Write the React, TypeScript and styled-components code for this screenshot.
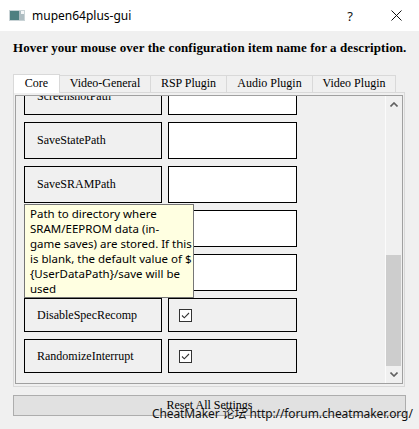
import React from "react";
import styled, { createGlobalStyle } from "styled-components";

const Global = createGlobalStyle`
  html, body { margin: 0; padding: 0; background: #f0f0f0; }
  body { width: 419px; height: 429px; overflow: hidden; }
`;

const Window = styled.div`
  position: relative;
  width: 419px;
  height: 429px;
  background: #f0f0f0;
  display: flex;
  flex-direction: column;
  overflow: hidden;
`;

const TitleBar = styled.div`
  height: 31px;
  flex: none;
  background: #ffffff;
  display: flex;
  align-items: center;
  padding-left: 9px;
  font-family: "Noto Sans", "Open Sans", sans-serif;
  font-size: 12px;
  color: #000;
`;

const TitleText = styled.span`
  margin-left: 7px;
  flex: 1;
  line-height: 16px;
`;

const TitleButton = styled.div`
  width: 46px;
  height: 31px;
  display: flex;
  align-items: center;
  justify-content: center;
  font-family: "Noto Sans", sans-serif;
  font-size: 13px;
  color: #111;
`;

const Body = styled.div`
  flex: 1;
  display: flex;
  flex-direction: column;
  padding: 9px 14px 0 13px;
`;

const Header = styled.div`
  font-family: "Liberation Serif", serif;
  font-weight: bold;
  font-size: 13px;
  letter-spacing: 0.08px;
  line-height: 16px;
  height: 16px;
  white-space: nowrap;
  color: #000;
`;

const TabBar = styled.div`
  margin-top: 18px;
  height: 18px;
  display: flex;
  align-items: flex-end;
  position: relative;
  z-index: 1;
`;

const Tab = styled.div<{ $w: number; $active?: boolean; $first?: boolean }>`
  box-sizing: border-box;
  width: ${(p) => p.$w}px;
  height: ${(p) => (p.$active ? 19 : 17)}px;
  margin-bottom: ${(p) => (p.$active ? -1 : 0)}px;
  background: ${(p) => (p.$active ? "#ffffff" : "#f0f0f0")};
  border-top: 1px solid #d9d9d9;
  border-right: 1px solid #d9d9d9;
  border-left: ${(p) => (p.$first ? "1px solid #d9d9d9" : "none")};
  font-family: "Liberation Serif", serif;
  font-size: 12px;
  line-height: ${(p) => (p.$active ? 17 : 15)}px;
  text-align: center;
  color: #000;
  white-space: nowrap;
`;

const Pane = styled.div`
  box-sizing: border-box;
  height: 295px;
  border: 1px solid #d9d9d9;
  padding: 2px 1px 2px 1px;
  background: #f0f0f0;
`;

const ScrollFrame = styled.div`
  box-sizing: border-box;
  height: 100%;
  border: 1px solid #a0a0a0;
  display: flex;
`;

const Viewport = styled.div`
  flex: 1;
  overflow: hidden;
  padding-left: 8px;
`;

const RowList = styled.div<{ $offset: number }>`
  margin-top: ${(p) => -p.$offset}px;
  display: flex;
  flex-direction: column;
  gap: 7px;
`;

const Row = styled.div<{ $h: number }>`
  display: flex;
  gap: 6px;
  height: ${(p) => p.$h}px;
`;

const NameBox = styled.div`
  box-sizing: border-box;
  width: 138px;
  border: 1px solid #000;
  background: #f0f0f0;
  display: flex;
  align-items: center;
  padding-left: 12px;
  font-family: "Liberation Serif", serif;
  font-size: 12px;
  color: #000;
  white-space: nowrap;
`;

const ValueBox = styled.div<{ $input?: boolean }>`
  box-sizing: border-box;
  width: 129px;
  border: 1px solid #000;
  background: ${(p) => (p.$input ? "#ffffff" : "#f0f0f0")};
  display: flex;
  align-items: center;
  padding-left: 10px;
`;

const ScrollBar = styled.div`
  width: 17px;
  flex: none;
  display: flex;
  flex-direction: column;
  background: #f0f0f0;
  box-sizing: border-box;
  border-left: 1px solid #fbfbfb;
`;

const ArrowButton = styled.div`
  height: 17px;
  flex: none;
  display: flex;
  align-items: center;
  justify-content: center;
`;

const Track = styled.div`
  flex: 1;
  display: flex;
  flex-direction: column;
  justify-content: flex-end;
`;

const Thumb = styled.div<{ $h: number }>`
  height: ${(p) => p.$h}px;
  margin: 0 1px 0 0;
  background: #cdcdcd;
`;

const ResetButton = styled.div`
  box-sizing: border-box;
  margin-top: 8px;
  height: 21px;
  width: 393px;
  background: #e1e1e1;
  border: 1px solid #adadad;
  font-family: "Liberation Serif", serif;
  font-size: 12px;
  line-height: 19px;
  text-align: center;
  color: #000;
`;

const Tooltip = styled.div`
  position: absolute;
  left: 24px;
  top: 204px;
  box-sizing: border-box;
  width: 170px;
  height: 94px;
  background: #ffffe1;
  border: 1px solid #767676;
  padding: 1px 0 0 5px;
  font-family: "Noto Sans", "Open Sans", sans-serif;
  font-size: 11.5px;
  line-height: 15px;
  color: #000;
  white-space: nowrap;
  z-index: 5;
`;

const Watermark = styled.div`
  position: absolute;
  left: 152px;
  top: 406px;
  font-family: "Noto Sans", "Noto Sans CJK SC", sans-serif;
  font-size: 12px;
  letter-spacing: -0.1px;
  line-height: 16px;
  color: #111;
  white-space: nowrap;
  z-index: 6;
`;

const AppIcon = () => (
  <svg width="16" height="11" viewBox="0 0 16 11">
    <rect x="0" y="0" width="16" height="11" fill="#c9d3d6" />
    <rect x="1" y="1" width="9" height="9" fill="#4f7f80" />
    <rect x="10" y="1" width="5" height="9" fill="#aebdc2" />
    <rect x="12" y="1" width="3" height="3" fill="#f4f6f7" />
  </svg>
);

const CloseIcon = () => (
  <svg width="11" height="11" viewBox="0 0 11 11">
    <path d="M0.5 0.5 L10.5 10.5 M10.5 0.5 L0.5 10.5" stroke="#111" strokeWidth="1" />
  </svg>
);

const Chevron = ({ up }: { up?: boolean }) => (
  <svg width="8" height="5" viewBox="0 0 8 5">
    <path
      d={up ? "M0.5 4.5 L4 1 L7.5 4.5" : "M0.5 0.5 L4 4 L7.5 0.5"}
      stroke="#606060"
      strokeWidth="1.6"
      fill="none"
    />
  </svg>
);

const CheckBox = () => (
  <svg width="13" height="13" viewBox="0 0 13 13">
    <rect x="0.5" y="0.5" width="12" height="12" fill="#ffffff" stroke="#333" />
    <path d="M3 6.5 L5.3 8.8 L10 4" stroke="#333" strokeWidth="1.1" fill="none" />
  </svg>
);

const tabs = [
  { label: "Core", w: 47 },
  { label: "Video-General", w: 91 },
  { label: "RSP Plugin", w: 76 },
  { label: "Audio Plugin", w: 86 },
  { label: "Video Plugin", w: 83 },
];

type Item = { name: string; kind: "text" | "bool" };
const items: Item[] = [
  { name: "ScreenshotPath", kind: "text" },
  { name: "SaveStatePath", kind: "text" },
  { name: "SaveSRAMPath", kind: "text" },
  { name: "SharedDataPath", kind: "text" },
  { name: "CountPerOp", kind: "text" },
  { name: "DisableSpecRecomp", kind: "bool" },
  { name: "RandomizeInterrupt", kind: "bool" },
];

export default function App() {
  return (
    <Window>
      <Global />
      <TitleBar>
        <AppIcon />
        <TitleText>mupen64plus-gui</TitleText>
        <TitleButton>?</TitleButton>
        <TitleButton>
          <CloseIcon />
        </TitleButton>
      </TitleBar>
      <Body>
        <Header>Hover your mouse over the configuration item name for a description.</Header>
        <TabBar>
          {tabs.map((t, i) => (
            <Tab key={t.label} $w={t.w} $active={i === 0} $first={i === 0}>
              {t.label}
            </Tab>
          ))}
        </TabBar>
        <Pane>
          <ScrollFrame>
            <Viewport>
              <RowList $offset={18}>
                {items.map((it) => (
                  <Row key={it.name} $h={it.kind === "text" ? 37 : 34}>
                    <NameBox>{it.name}</NameBox>
                    <ValueBox $input={it.kind === "text"}>
                      {it.kind === "bool" ? <CheckBox /> : null}
                    </ValueBox>
                  </Row>
                ))}
              </RowList>
            </Viewport>
            <ScrollBar>
              <ArrowButton>
                <Chevron up />
              </ArrowButton>
              <Track>
                <Thumb $h={111} />
              </Track>
              <ArrowButton>
                <Chevron />
              </ArrowButton>
            </ScrollBar>
          </ScrollFrame>
        </Pane>
        <ResetButton>Reset All Settings</ResetButton>
      </Body>
      <Tooltip>
        Path to directory where
        <br />
        SRAM/EEPROM data (in-
        <br />
        game saves) are stored. If this
        <br />
        is blank, the default value of $
        <br />
        {"{UserDataPath}/save will be"}
        <br />
        used
      </Tooltip>
      <Watermark>CheatMaker 论坛 http://forum.cheatmaker.org/</Watermark>
    </Window>
  );
}
